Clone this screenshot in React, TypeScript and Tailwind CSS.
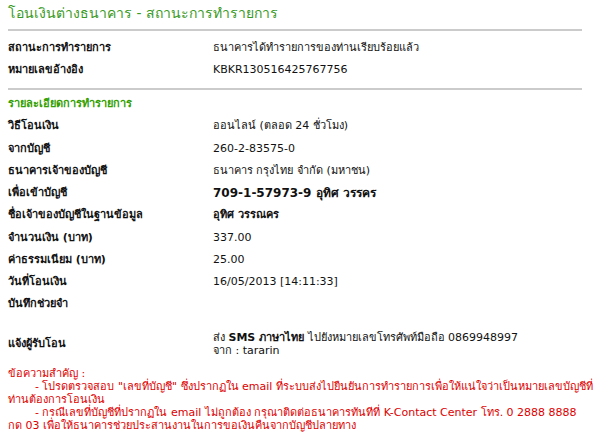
import React from "react";

const rows: { label: string; value: React.ReactNode }[] = [
  { label: "วิธีโอนเงิน", value: "ออนไลน์ (ตลอด 24 ชั่วโมง)" },
  { label: "จากบัญชี", value: "260-2-83575-0" },
  { label: "ธนาคารเจ้าของบัญชี", value: "ธนาคาร กรุงไทย จำกัด (มหาชน)" },
  { label: "เพื่อเข้าบัญชี", value: <b className="text-[12px]">709-1-57973-9 อุทิศ วรรคร</b> },
  { label: "ชื่อเจ้าของบัญชีในฐานข้อมูล", value: <b>อุทิศ วรรณคร</b> },
  { label: "จำนวนเงิน (บาท)", value: "337.00" },
  { label: "ค่าธรรมเนียม (บาท)", value: "25.00" },
  { label: "วันที่โอนเงิน", value: "16/05/2013 [14:11:33]" },
  { label: "บันทึกช่วยจำ", value: "" },
];

function Row({ label, value }: { label: string; value: React.ReactNode }) {
  return (
    <div className="flex h-[22.25px] items-center">
      <div className="w-[205px] font-bold">{label}</div>
      <div className="flex-1">{value}</div>
    </div>
  );
}

export default function App() {
  return (
    <div
      className="w-[594px] h-[438px] bg-white text-[11px] text-[#111] overflow-hidden"
      style={{ fontFamily: '"DejaVu Sans", Tahoma, Verdana, sans-serif' }}
    >
      <div className="pl-[8px] pr-[12px] pt-[4px]">
        <div className="h-[18px] leading-[18px] text-[14px] text-[#3a9a1e]">
          โอนเงินต่างธนาคาร - สถานะการทำรายการ
        </div>
        <div className="mt-[7px] h-[2px] bg-[#cbcbcb]" />
        <div className="mt-[6px]">
          <Row label="สถานะการทำรายการ" value="ธนาคารได้ทำรายการของท่านเรียบร้อยแล้ว" />
          <Row label="หมายเลขอ้างอิง" value="KBKR130516425767756" />
        </div>
        <div className="mt-[6px] h-[2px] bg-[#cbcbcb]" />
        <div className="mt-[4px] h-[22px] flex items-center font-semibold text-[#33a000]">
          รายละเอียดการทำรายการ
        </div>
        <div>
          {rows.map((r) => (
            <Row key={r.label} label={r.label} value={r.value} />
          ))}
        </div>
        <div className="flex items-center pt-[15px]">
          <div className="w-[205px] font-bold">แจ้งผู้รับโอน</div>
          <div className="flex-1 leading-[13px]">
            <div>
              ส่ง <b>SMS ภาษาไทย</b> ไปยังหมายเลขโทรศัพท์มือถือ 0869948997
            </div>
            <div>จาก : tararin</div>
          </div>
        </div>
        <div className="mt-[10px] text-[#dd0000] leading-[13px] whitespace-nowrap">
          <div>ข้อความสำคัญ :</div>
          <div>
            <span className="inline-block w-[27px]" />- โปรดตรวจสอบ "เลขที่บัญชี" ซึ่งปรากฏใน email
            ที่ระบบส่งไปยืนยันการทำรายการเพื่อให้แน่ใจว่าเป็นหมายเลขบัญชีที่
          </div>
          <div>ท่านต้องการโอนเงิน</div>
          <div>
            <span className="inline-block w-[27px]" />- กรณีเลขที่บัญชีที่ปรากฏใน email ไม่ถูกต้อง
            กรุณาติดต่อธนาคารทันทีที่ K-Contact Center โทร. 0 2888 8888
          </div>
          <div>กด 03 เพื่อให้ธนาคารช่วยประสานงานในการขอเงินคืนจากบัญชีปลายทาง</div>
        </div>
      </div>
    </div>
  );
}
